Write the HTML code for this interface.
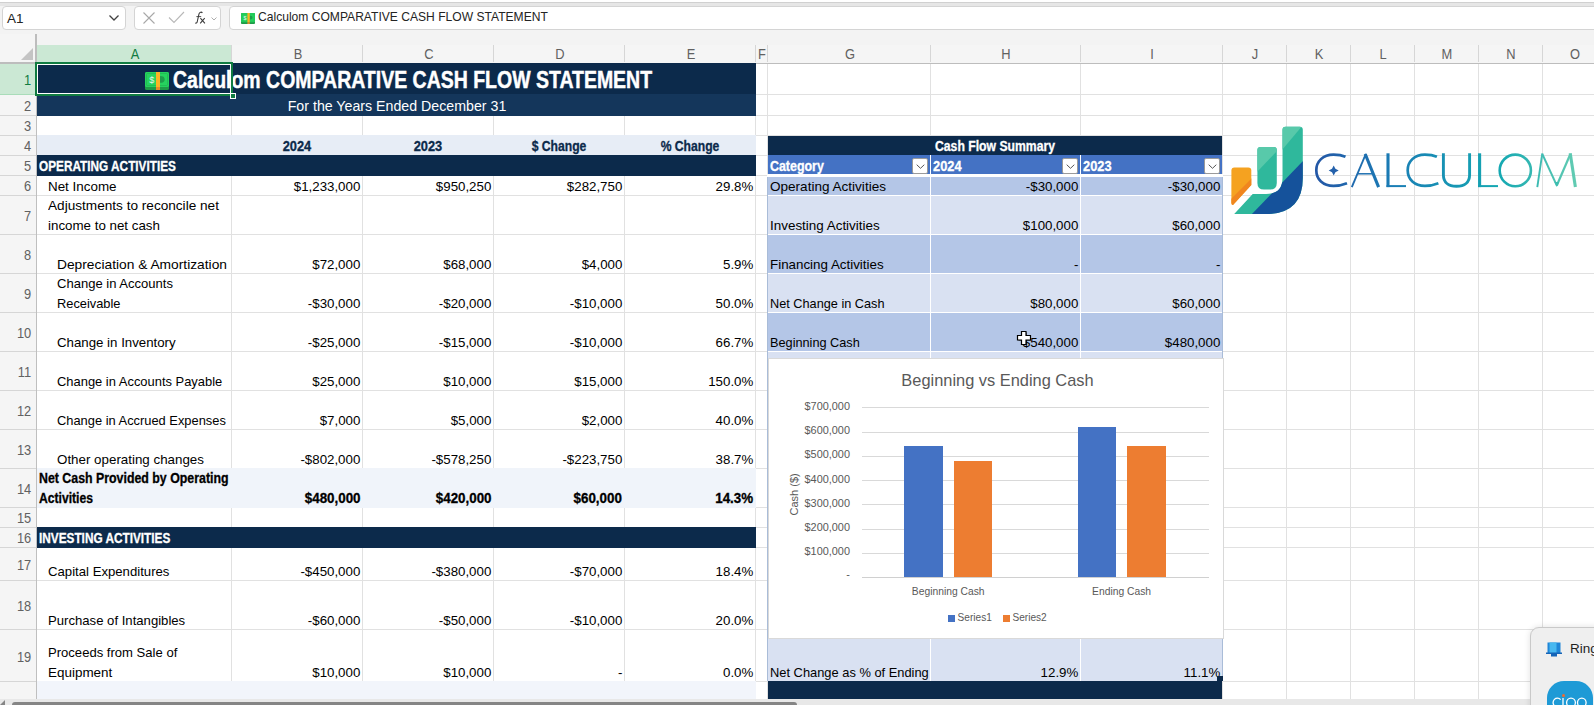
<!DOCTYPE html>
<html><head><meta charset="utf-8"><style>
html,body{margin:0;padding:0;width:1594px;height:705px;overflow:hidden;background:#fff;font-family:"Liberation Sans",sans-serif;}
.r{position:absolute;box-sizing:content-box;}
.t{position:absolute;white-space:nowrap;}
</style></head><body>
<div class="r" style="left:0px;top:0px;width:1594px;height:45px;background:#f3f3f3;"></div>
<div class="r" style="left:0px;top:0px;width:1594px;height:2px;background:#ffffff;"></div>
<div class="r" style="left:0px;top:2px;width:1594px;height:1px;background:#d0d0d0;"></div>
<div class="r" style="left:0px;top:3px;width:1594px;height:3px;background:#e6e6e6;"></div>
<div class="r" style="left:2px;top:6px;width:122px;height:22px;background:#fff;border:1px solid #d4d4d4;border-radius:4px"></div>
<div class="t" style="left:7.00px;top:11.57px;font-size:13.5px;line-height:13.5px;font-weight:400;color:#242424;transform-origin:left;">A1</div>
<svg class="r" style="left:107.5px;top:14px" width="12" height="8" viewBox="0 0 12 8"><path d="M1.5 1.5 L6 6 L10.5 1.5" fill="none" stroke="#424242" stroke-width="1.3"/></svg>
<div class="r" style="left:134px;top:6px;width:85px;height:22px;background:#fff;border:1px solid #d4d4d4;border-radius:4px"></div>
<svg class="r" style="left:142px;top:11px" width="14" height="14" viewBox="0 0 14 14"><path d="M1.5 1.5 L12.5 12.5 M12.5 1.5 L1.5 12.5" fill="none" stroke="#a8a8a8" stroke-width="1.1"/></svg>
<svg class="r" style="left:168px;top:11px" width="17" height="13" viewBox="0 0 17 13"><path d="M1 6.5 L6 11.5 L16 1" fill="none" stroke="#b8b8b8" stroke-width="1.1"/></svg>
<svg class="r" style="left:190px;top:8px" width="20" height="20" viewBox="190 8 20 20"><g fill="none" stroke="#3a3a3a" stroke-width="1.05"><path d="M202.4 12.9 C201.6 11.7 199.5 11.8 199 13.8 L197.2 21.8 C196.9 23.2 195.9 23.4 195.2 22.8"/><path d="M196.4 16.6 H201.2" stroke-width="0.9"/><path d="M200.4 18.2 L204.9 23.4 M204.7 18.2 L200.2 23.4"/></g></svg>
<svg class="r" style="left:211px;top:17px" width="6" height="4" viewBox="0 0 6 4"><path d="M0.5 0.5 L3 3 L5.5 0.5" fill="none" stroke="#999" stroke-width="0.8"/></svg>
<div class="r" style="left:229px;top:6px;width:1400px;height:22px;background:#fff;border:1px solid #d4d4d4;border-radius:4px"></div>
<svg class="r" style="left:241px;top:13px" width="14" height="11" viewBox="0 0 24 18" preserveAspectRatio="none"><rect x="0" y="0" width="24" height="18" rx="1.6" fill="#1f9a48"/><rect x="0" y="0" width="24" height="15" rx="1.6" fill="#26d35e"/><rect x="1.5" y="1.5" width="21" height="12" rx="0.8" fill="none" stroke="#1fb552" stroke-width="0.7"/><path d="M15 4 A4.7 3.4 0 0 1 15 10.8 Z" fill="#1f9d4c"/><rect x="11" y="0" width="4" height="15" fill="#fbb424"/><rect x="11" y="15" width="4" height="3" fill="#e88a2a"/><text x="4.2" y="11" font-size="9" fill="#e6f5ea" font-family="Liberation Sans">$</text></svg>
<div class="t" style="left:258.00px;top:10.29px;font-size:13.6px;line-height:13.6px;font-weight:400;color:#242424;transform:scaleX(0.889);transform-origin:left;">Calculom COMPARATIVE CASH FLOW STATEMENT</div>
<div class="r" style="left:0px;top:45px;width:1594px;height:18px;background:#f5f5f5;"></div>
<div class="r" style="left:0px;top:34px;width:36px;height:11px;background:#f5f5f5;"></div>
<div class="r" style="left:0px;top:63px;width:36px;height:642px;background:#f5f5f5;"></div>
<div class="r" style="left:0px;top:63px;width:1594px;height:1px;background:#bdbdbd;"></div>
<div class="r" style="left:36px;top:34px;width:1px;height:671px;background:#bfbfbf;"></div>
<svg class="r" style="left:20px;top:48px" width="14" height="13" viewBox="0 0 14 13"><path d="M13 0 L13 12 L1 12 Z" fill="#c4c4c4"/></svg>
<div class="r" style="left:37px;top:45px;width:195px;height:17px;background:#cbe8d4;"></div>
<div class="r" style="left:231px;top:45px;width:1px;height:17px;background:#9fd5b0;"></div>
<div class="r" style="left:37px;top:62px;width:195px;height:1px;background:#107c41;"></div>
<div class="r" style="left:0px;top:64px;width:35px;height:31px;background:#cbe8d4;"></div>
<div class="r" style="left:231px;top:45px;width:1px;height:17px;background:#d6d6d6;"></div>
<div class="t" style="left:-465.20px;width:1200px;top:46.95px;font-size:14px;line-height:14px;font-weight:400;color:#107c41;text-align:center;transform:scaleX(0.92);transform-origin:center;">A</div>
<div class="r" style="left:362px;top:45px;width:1px;height:17px;background:#d6d6d6;"></div>
<div class="t" style="left:-302.20px;width:1200px;top:46.95px;font-size:14px;line-height:14px;font-weight:400;color:#616161;text-align:center;transform:scaleX(0.92);transform-origin:center;">B</div>
<div class="r" style="left:493px;top:45px;width:1px;height:17px;background:#d6d6d6;"></div>
<div class="t" style="left:-171.20px;width:1200px;top:46.95px;font-size:14px;line-height:14px;font-weight:400;color:#616161;text-align:center;transform:scaleX(0.92);transform-origin:center;">C</div>
<div class="r" style="left:624px;top:45px;width:1px;height:17px;background:#d6d6d6;"></div>
<div class="t" style="left:-40.20px;width:1200px;top:46.95px;font-size:14px;line-height:14px;font-weight:400;color:#616161;text-align:center;transform:scaleX(0.92);transform-origin:center;">D</div>
<div class="r" style="left:755px;top:45px;width:1px;height:17px;background:#d6d6d6;"></div>
<div class="t" style="left:90.80px;width:1200px;top:46.95px;font-size:14px;line-height:14px;font-weight:400;color:#616161;text-align:center;transform:scaleX(0.92);transform-origin:center;">E</div>
<div class="r" style="left:767px;top:45px;width:1px;height:17px;background:#d6d6d6;"></div>
<div class="t" style="left:162.30px;width:1200px;top:46.95px;font-size:14px;line-height:14px;font-weight:400;color:#616161;text-align:center;transform:scaleX(0.92);transform-origin:center;">F</div>
<div class="r" style="left:930px;top:45px;width:1px;height:17px;background:#d6d6d6;"></div>
<div class="t" style="left:249.80px;width:1200px;top:46.95px;font-size:14px;line-height:14px;font-weight:400;color:#616161;text-align:center;transform:scaleX(0.92);transform-origin:center;">G</div>
<div class="r" style="left:1080px;top:45px;width:1px;height:17px;background:#d6d6d6;"></div>
<div class="t" style="left:406.30px;width:1200px;top:46.95px;font-size:14px;line-height:14px;font-weight:400;color:#616161;text-align:center;transform:scaleX(0.92);transform-origin:center;">H</div>
<div class="r" style="left:1222px;top:45px;width:1px;height:17px;background:#d6d6d6;"></div>
<div class="t" style="left:552.30px;width:1200px;top:46.95px;font-size:14px;line-height:14px;font-weight:400;color:#616161;text-align:center;transform:scaleX(0.92);transform-origin:center;">I</div>
<div class="r" style="left:1286px;top:45px;width:1px;height:17px;background:#d6d6d6;"></div>
<div class="t" style="left:655.30px;width:1200px;top:46.95px;font-size:14px;line-height:14px;font-weight:400;color:#616161;text-align:center;transform:scaleX(0.92);transform-origin:center;">J</div>
<div class="r" style="left:1350px;top:45px;width:1px;height:17px;background:#d6d6d6;"></div>
<div class="t" style="left:719.30px;width:1200px;top:46.95px;font-size:14px;line-height:14px;font-weight:400;color:#616161;text-align:center;transform:scaleX(0.92);transform-origin:center;">K</div>
<div class="r" style="left:1414px;top:45px;width:1px;height:17px;background:#d6d6d6;"></div>
<div class="t" style="left:783.30px;width:1200px;top:46.95px;font-size:14px;line-height:14px;font-weight:400;color:#616161;text-align:center;transform:scaleX(0.92);transform-origin:center;">L</div>
<div class="r" style="left:1478px;top:45px;width:1px;height:17px;background:#d6d6d6;"></div>
<div class="t" style="left:847.30px;width:1200px;top:46.95px;font-size:14px;line-height:14px;font-weight:400;color:#616161;text-align:center;transform:scaleX(0.92);transform-origin:center;">M</div>
<div class="r" style="left:1542px;top:45px;width:1px;height:17px;background:#d6d6d6;"></div>
<div class="t" style="left:911.30px;width:1200px;top:46.95px;font-size:14px;line-height:14px;font-weight:400;color:#616161;text-align:center;transform:scaleX(0.92);transform-origin:center;">N</div>
<div class="t" style="left:975.30px;width:1200px;top:46.95px;font-size:14px;line-height:14px;font-weight:400;color:#616161;text-align:center;transform:scaleX(0.92);transform-origin:center;">O</div>
<div class="r" style="left:37px;top:64px;width:1557px;height:641px;background:#ffffff;"></div>
<div class="r" style="left:231px;top:64px;width:1px;height:641px;background:#e1e1e1;"></div>
<div class="r" style="left:362px;top:64px;width:1px;height:641px;background:#e1e1e1;"></div>
<div class="r" style="left:493px;top:64px;width:1px;height:641px;background:#e1e1e1;"></div>
<div class="r" style="left:624px;top:64px;width:1px;height:641px;background:#e1e1e1;"></div>
<div class="r" style="left:755px;top:64px;width:1px;height:641px;background:#e1e1e1;"></div>
<div class="r" style="left:767px;top:64px;width:1px;height:641px;background:#e1e1e1;"></div>
<div class="r" style="left:930px;top:64px;width:1px;height:641px;background:#e1e1e1;"></div>
<div class="r" style="left:1080px;top:64px;width:1px;height:641px;background:#e1e1e1;"></div>
<div class="r" style="left:1222px;top:64px;width:1px;height:641px;background:#e1e1e1;"></div>
<div class="r" style="left:1286px;top:64px;width:1px;height:641px;background:#e1e1e1;"></div>
<div class="r" style="left:1350px;top:64px;width:1px;height:641px;background:#e1e1e1;"></div>
<div class="r" style="left:1414px;top:64px;width:1px;height:641px;background:#e1e1e1;"></div>
<div class="r" style="left:1478px;top:64px;width:1px;height:641px;background:#e1e1e1;"></div>
<div class="r" style="left:1542px;top:64px;width:1px;height:641px;background:#e1e1e1;"></div>
<div class="r" style="left:37px;top:94px;width:1557px;height:1px;background:#e1e1e1;"></div>
<div class="r" style="left:37px;top:115px;width:1557px;height:1px;background:#e1e1e1;"></div>
<div class="r" style="left:37px;top:135px;width:1557px;height:1px;background:#e1e1e1;"></div>
<div class="r" style="left:37px;top:155px;width:1557px;height:1px;background:#e1e1e1;"></div>
<div class="r" style="left:37px;top:175px;width:1557px;height:1px;background:#e1e1e1;"></div>
<div class="r" style="left:37px;top:195px;width:1557px;height:1px;background:#e1e1e1;"></div>
<div class="r" style="left:37px;top:234px;width:1557px;height:1px;background:#e1e1e1;"></div>
<div class="r" style="left:37px;top:273px;width:1557px;height:1px;background:#e1e1e1;"></div>
<div class="r" style="left:37px;top:312px;width:1557px;height:1px;background:#e1e1e1;"></div>
<div class="r" style="left:37px;top:351px;width:1557px;height:1px;background:#e1e1e1;"></div>
<div class="r" style="left:37px;top:390px;width:1557px;height:1px;background:#e1e1e1;"></div>
<div class="r" style="left:37px;top:429px;width:1557px;height:1px;background:#e1e1e1;"></div>
<div class="r" style="left:37px;top:468px;width:1557px;height:1px;background:#e1e1e1;"></div>
<div class="r" style="left:37px;top:507px;width:1557px;height:1px;background:#e1e1e1;"></div>
<div class="r" style="left:37px;top:527px;width:1557px;height:1px;background:#e1e1e1;"></div>
<div class="r" style="left:37px;top:547px;width:1557px;height:1px;background:#e1e1e1;"></div>
<div class="r" style="left:37px;top:580px;width:1557px;height:1px;background:#e1e1e1;"></div>
<div class="r" style="left:37px;top:629px;width:1557px;height:1px;background:#e1e1e1;"></div>
<div class="r" style="left:37px;top:681px;width:1557px;height:1px;background:#e1e1e1;"></div>
<div class="r" style="left:0px;top:94px;width:36px;height:1px;background:#a9dcb9;"></div>
<div class="t" style="right:1562.50px;top:72.84px;font-size:14.6px;line-height:14.6px;font-weight:400;color:#107c41;text-align:right;transform:scaleX(0.88);transform-origin:right;">1</div>
<div class="r" style="left:0px;top:115px;width:36px;height:1px;background:#d6d6d6;"></div>
<div class="t" style="right:1562.50px;top:98.64px;font-size:14.6px;line-height:14.6px;font-weight:400;color:#616161;text-align:right;transform:scaleX(0.88);transform-origin:right;">2</div>
<div class="r" style="left:0px;top:135px;width:36px;height:1px;background:#d6d6d6;"></div>
<div class="t" style="right:1562.50px;top:119.14px;font-size:14.6px;line-height:14.6px;font-weight:400;color:#616161;text-align:right;transform:scaleX(0.88);transform-origin:right;">3</div>
<div class="r" style="left:0px;top:155px;width:36px;height:1px;background:#d6d6d6;"></div>
<div class="t" style="right:1562.50px;top:139.14px;font-size:14.6px;line-height:14.6px;font-weight:400;color:#616161;text-align:right;transform:scaleX(0.88);transform-origin:right;">4</div>
<div class="r" style="left:0px;top:175px;width:36px;height:1px;background:#d6d6d6;"></div>
<div class="t" style="right:1562.50px;top:159.14px;font-size:14.6px;line-height:14.6px;font-weight:400;color:#616161;text-align:right;transform:scaleX(0.88);transform-origin:right;">5</div>
<div class="r" style="left:0px;top:195px;width:36px;height:1px;background:#d6d6d6;"></div>
<div class="t" style="right:1562.50px;top:179.14px;font-size:14.6px;line-height:14.6px;font-weight:400;color:#616161;text-align:right;transform:scaleX(0.88);transform-origin:right;">6</div>
<div class="r" style="left:0px;top:234px;width:36px;height:1px;background:#d6d6d6;"></div>
<div class="t" style="right:1562.50px;top:209.34px;font-size:14.6px;line-height:14.6px;font-weight:400;color:#616161;text-align:right;transform:scaleX(0.88);transform-origin:right;">7</div>
<div class="r" style="left:0px;top:273px;width:36px;height:1px;background:#d6d6d6;"></div>
<div class="t" style="right:1562.50px;top:248.34px;font-size:14.6px;line-height:14.6px;font-weight:400;color:#616161;text-align:right;transform:scaleX(0.88);transform-origin:right;">8</div>
<div class="r" style="left:0px;top:312px;width:36px;height:1px;background:#d6d6d6;"></div>
<div class="t" style="right:1562.50px;top:287.34px;font-size:14.6px;line-height:14.6px;font-weight:400;color:#616161;text-align:right;transform:scaleX(0.88);transform-origin:right;">9</div>
<div class="r" style="left:0px;top:351px;width:36px;height:1px;background:#d6d6d6;"></div>
<div class="t" style="right:1562.50px;top:326.34px;font-size:14.6px;line-height:14.6px;font-weight:400;color:#616161;text-align:right;transform:scaleX(0.88);transform-origin:right;">10</div>
<div class="r" style="left:0px;top:390px;width:36px;height:1px;background:#d6d6d6;"></div>
<div class="t" style="right:1562.50px;top:365.34px;font-size:14.6px;line-height:14.6px;font-weight:400;color:#616161;text-align:right;transform:scaleX(0.88);transform-origin:right;">11</div>
<div class="r" style="left:0px;top:429px;width:36px;height:1px;background:#d6d6d6;"></div>
<div class="t" style="right:1562.50px;top:404.34px;font-size:14.6px;line-height:14.6px;font-weight:400;color:#616161;text-align:right;transform:scaleX(0.88);transform-origin:right;">12</div>
<div class="r" style="left:0px;top:468px;width:36px;height:1px;background:#d6d6d6;"></div>
<div class="t" style="right:1562.50px;top:443.34px;font-size:14.6px;line-height:14.6px;font-weight:400;color:#616161;text-align:right;transform:scaleX(0.88);transform-origin:right;">13</div>
<div class="r" style="left:0px;top:507px;width:36px;height:1px;background:#d6d6d6;"></div>
<div class="t" style="right:1562.50px;top:482.34px;font-size:14.6px;line-height:14.6px;font-weight:400;color:#616161;text-align:right;transform:scaleX(0.88);transform-origin:right;">14</div>
<div class="r" style="left:0px;top:527px;width:36px;height:1px;background:#d6d6d6;"></div>
<div class="t" style="right:1562.50px;top:511.14px;font-size:14.6px;line-height:14.6px;font-weight:400;color:#616161;text-align:right;transform:scaleX(0.88);transform-origin:right;">15</div>
<div class="r" style="left:0px;top:547px;width:36px;height:1px;background:#d6d6d6;"></div>
<div class="t" style="right:1562.50px;top:531.14px;font-size:14.6px;line-height:14.6px;font-weight:400;color:#616161;text-align:right;transform:scaleX(0.88);transform-origin:right;">16</div>
<div class="r" style="left:0px;top:580px;width:36px;height:1px;background:#d6d6d6;"></div>
<div class="t" style="right:1562.50px;top:558.34px;font-size:14.6px;line-height:14.6px;font-weight:400;color:#616161;text-align:right;transform:scaleX(0.88);transform-origin:right;">17</div>
<div class="r" style="left:0px;top:629px;width:36px;height:1px;background:#d6d6d6;"></div>
<div class="t" style="right:1562.50px;top:599.34px;font-size:14.6px;line-height:14.6px;font-weight:400;color:#616161;text-align:right;transform:scaleX(0.88);transform-origin:right;">18</div>
<div class="r" style="left:0px;top:681px;width:36px;height:1px;background:#d6d6d6;"></div>
<div class="t" style="right:1562.50px;top:649.84px;font-size:14.6px;line-height:14.6px;font-weight:400;color:#616161;text-align:right;transform:scaleX(0.88);transform-origin:right;">19</div>
<div class="r" style="left:37px;top:63px;width:719px;height:31px;background:#0c2a4b;"></div>
<div class="r" style="left:37px;top:94px;width:719px;height:22px;background:#14365b;"></div>
<div class="r" style="left:37px;top:135px;width:719px;height:21px;background:#e7edf6;"></div>
<div class="r" style="left:37px;top:155px;width:719px;height:21px;background:#0c2a4b;"></div>
<div class="r" style="left:37px;top:468px;width:719px;height:40px;background:#f0f4fa;"></div>
<div class="r" style="left:37px;top:527px;width:719px;height:21px;background:#0c2a4b;"></div>
<div class="r" style="left:37px;top:681px;width:719px;height:18px;background:#f2f5fb;"></div>
<svg class="r" style="left:145px;top:72px" width="24" height="18" viewBox="0 0 24 18" preserveAspectRatio="none"><rect x="0" y="0" width="24" height="18" rx="1.6" fill="#1f9a48"/><rect x="0" y="0" width="24" height="15" rx="1.6" fill="#26d35e"/><rect x="1.5" y="1.5" width="21" height="12" rx="0.8" fill="none" stroke="#1fb552" stroke-width="0.7"/><path d="M15 4 A4.7 3.4 0 0 1 15 10.8 Z" fill="#1f9d4c"/><rect x="11" y="0" width="4" height="15" fill="#fbb424"/><rect x="11" y="15" width="4" height="3" fill="#e88a2a"/><text x="4.2" y="11" font-size="9" fill="#e6f5ea" font-family="Liberation Sans">$</text></svg>
<div class="t" style="left:173.00px;top:68.93px;font-size:23px;line-height:23px;font-weight:700;color:#fff;transform:scaleX(0.847);transform-origin:left;-webkit-text-stroke:0.45px #fff;">Calculom COMPARATIVE CASH FLOW STATEMENT</div>
<div class="t" style="left:-203.50px;width:1200px;top:98.75px;font-size:14px;line-height:14px;font-weight:400;color:#fff;text-align:center;transform:scaleX(1.014);transform-origin:center;">For the Years Ended December 31</div>
<div class="t" style="left:-303.00px;width:1200px;top:140.12px;font-size:13.8px;line-height:13.8px;font-weight:700;color:#0c2a4b;text-align:center;transform:scaleX(0.93);transform-origin:center;-webkit-text-stroke:0.3px #0c2a4b;">2024</div>
<div class="t" style="left:-172.00px;width:1200px;top:140.12px;font-size:13.8px;line-height:13.8px;font-weight:700;color:#0c2a4b;text-align:center;transform:scaleX(0.93);transform-origin:center;-webkit-text-stroke:0.3px #0c2a4b;">2023</div>
<div class="t" style="left:-41.00px;width:1200px;top:140.12px;font-size:13.8px;line-height:13.8px;font-weight:700;color:#0c2a4b;text-align:center;transform:scaleX(0.88);transform-origin:center;-webkit-text-stroke:0.3px #0c2a4b;">$ Change</div>
<div class="t" style="left:90.00px;width:1200px;top:140.12px;font-size:13.8px;line-height:13.8px;font-weight:700;color:#0c2a4b;text-align:center;transform:scaleX(0.88);transform-origin:center;-webkit-text-stroke:0.3px #0c2a4b;">% Change</div>
<div class="t" style="left:39.00px;top:160.32px;font-size:13.8px;line-height:13.8px;font-weight:700;color:#fff;transform:scaleX(0.855);transform-origin:left;-webkit-text-stroke:0.3px #fff;">OPERATING ACTIVITIES</div>
<div class="t" style="left:39.00px;top:532.32px;font-size:13.8px;line-height:13.8px;font-weight:700;color:#fff;transform:scaleX(0.855);transform-origin:left;-webkit-text-stroke:0.3px #fff;">INVESTING ACTIVITIES</div>
<div class="t" style="left:47.75px;top:180.34px;font-size:13.3px;line-height:13.3px;font-weight:400;color:#000000;transform:scaleX(1.0073529411764706);transform-origin:left;">Net Income</div>
<div class="t" style="right:1233.70px;top:180.34px;font-size:13.3px;line-height:13.3px;font-weight:400;color:#000000;text-align:right;transform-origin:right;">$1,233,000</div>
<div class="t" style="right:1102.70px;top:180.34px;font-size:13.3px;line-height:13.3px;font-weight:400;color:#000000;text-align:right;transform-origin:right;">$950,250</div>
<div class="t" style="right:971.70px;top:180.34px;font-size:13.3px;line-height:13.3px;font-weight:400;color:#000000;text-align:right;transform-origin:right;">$282,750</div>
<div class="t" style="right:840.70px;top:180.34px;font-size:13.3px;line-height:13.3px;font-weight:400;color:#000000;text-align:right;transform-origin:right;">29.8%</div>
<div class="t" style="left:47.75px;top:199.34px;font-size:13.3px;line-height:13.3px;font-weight:400;color:#000000;transform:scaleX(1.0233393177737882);transform-origin:left;">Adjustments to reconcile net</div>
<div class="t" style="left:47.75px;top:219.34px;font-size:13.3px;line-height:13.3px;font-weight:400;color:#000000;transform:scaleX(1.0031347962382444);transform-origin:left;">income to net cash</div>
<div class="t" style="left:57.40px;top:258.34px;font-size:13.3px;line-height:13.3px;font-weight:400;color:#000000;transform:scaleX(1.035953686776356);transform-origin:left;">Depreciation &amp; Amortization</div>
<div class="t" style="right:1233.70px;top:258.34px;font-size:13.3px;line-height:13.3px;font-weight:400;color:#000000;text-align:right;transform-origin:right;">$72,000</div>
<div class="t" style="right:1102.70px;top:258.34px;font-size:13.3px;line-height:13.3px;font-weight:400;color:#000000;text-align:right;transform-origin:right;">$68,000</div>
<div class="t" style="right:971.70px;top:258.34px;font-size:13.3px;line-height:13.3px;font-weight:400;color:#000000;text-align:right;transform-origin:right;">$4,000</div>
<div class="t" style="right:840.70px;top:258.34px;font-size:13.3px;line-height:13.3px;font-weight:400;color:#000000;text-align:right;transform-origin:right;">5.9%</div>
<div class="t" style="left:57.40px;top:277.34px;font-size:13.3px;line-height:13.3px;font-weight:400;color:#000000;transform:scaleX(0.9805579036348268);transform-origin:left;">Change in Accounts</div>
<div class="t" style="left:57.40px;top:297.34px;font-size:13.3px;line-height:13.3px;font-weight:400;color:#000000;transform:scaleX(0.9650455927051672);transform-origin:left;">Receivable</div>
<div class="t" style="right:1233.70px;top:297.34px;font-size:13.3px;line-height:13.3px;font-weight:400;color:#000000;text-align:right;transform-origin:right;">-$30,000</div>
<div class="t" style="right:1102.70px;top:297.34px;font-size:13.3px;line-height:13.3px;font-weight:400;color:#000000;text-align:right;transform-origin:right;">-$20,000</div>
<div class="t" style="right:971.70px;top:297.34px;font-size:13.3px;line-height:13.3px;font-weight:400;color:#000000;text-align:right;transform-origin:right;">-$10,000</div>
<div class="t" style="right:840.70px;top:297.34px;font-size:13.3px;line-height:13.3px;font-weight:400;color:#000000;text-align:right;transform-origin:right;">50.0%</div>
<div class="t" style="left:57.40px;top:336.34px;font-size:13.3px;line-height:13.3px;font-weight:400;color:#000000;transform:scaleX(0.9970600587988241);transform-origin:left;">Change in Inventory</div>
<div class="t" style="right:1233.70px;top:336.34px;font-size:13.3px;line-height:13.3px;font-weight:400;color:#000000;text-align:right;transform-origin:right;">-$25,000</div>
<div class="t" style="right:1102.70px;top:336.34px;font-size:13.3px;line-height:13.3px;font-weight:400;color:#000000;text-align:right;transform-origin:right;">-$15,000</div>
<div class="t" style="right:971.70px;top:336.34px;font-size:13.3px;line-height:13.3px;font-weight:400;color:#000000;text-align:right;transform-origin:right;">-$10,000</div>
<div class="t" style="right:840.70px;top:336.34px;font-size:13.3px;line-height:13.3px;font-weight:400;color:#000000;text-align:right;transform-origin:right;">66.7%</div>
<div class="t" style="left:57.40px;top:375.34px;font-size:13.3px;line-height:13.3px;font-weight:400;color:#000000;transform:scaleX(0.9720670391061452);transform-origin:left;">Change in Accounts Payable</div>
<div class="t" style="right:1233.70px;top:375.34px;font-size:13.3px;line-height:13.3px;font-weight:400;color:#000000;text-align:right;transform-origin:right;">$25,000</div>
<div class="t" style="right:1102.70px;top:375.34px;font-size:13.3px;line-height:13.3px;font-weight:400;color:#000000;text-align:right;transform-origin:right;">$10,000</div>
<div class="t" style="right:971.70px;top:375.34px;font-size:13.3px;line-height:13.3px;font-weight:400;color:#000000;text-align:right;transform-origin:right;">$15,000</div>
<div class="t" style="right:840.70px;top:375.34px;font-size:13.3px;line-height:13.3px;font-weight:400;color:#000000;text-align:right;transform-origin:right;">150.0%</div>
<div class="t" style="left:57.40px;top:414.34px;font-size:13.3px;line-height:13.3px;font-weight:400;color:#000000;transform:scaleX(0.9679083094555875);transform-origin:left;">Change in Accrued Expenses</div>
<div class="t" style="right:1233.70px;top:414.34px;font-size:13.3px;line-height:13.3px;font-weight:400;color:#000000;text-align:right;transform-origin:right;">$7,000</div>
<div class="t" style="right:1102.70px;top:414.34px;font-size:13.3px;line-height:13.3px;font-weight:400;color:#000000;text-align:right;transform-origin:right;">$5,000</div>
<div class="t" style="right:971.70px;top:414.34px;font-size:13.3px;line-height:13.3px;font-weight:400;color:#000000;text-align:right;transform-origin:right;">$2,000</div>
<div class="t" style="right:840.70px;top:414.34px;font-size:13.3px;line-height:13.3px;font-weight:400;color:#000000;text-align:right;transform-origin:right;">40.0%</div>
<div class="t" style="left:57.40px;top:453.34px;font-size:13.3px;line-height:13.3px;font-weight:400;color:#000000;transform:scaleX(1.0040983606557377);transform-origin:left;">Other operating changes</div>
<div class="t" style="right:1233.70px;top:453.34px;font-size:13.3px;line-height:13.3px;font-weight:400;color:#000000;text-align:right;transform-origin:right;">-$802,000</div>
<div class="t" style="right:1102.70px;top:453.34px;font-size:13.3px;line-height:13.3px;font-weight:400;color:#000000;text-align:right;transform-origin:right;">-$578,250</div>
<div class="t" style="right:971.70px;top:453.34px;font-size:13.3px;line-height:13.3px;font-weight:400;color:#000000;text-align:right;transform-origin:right;">-$223,750</div>
<div class="t" style="right:840.70px;top:453.34px;font-size:13.3px;line-height:13.3px;font-weight:400;color:#000000;text-align:right;transform-origin:right;">38.7%</div>
<div class="t" style="left:47.75px;top:565.34px;font-size:13.3px;line-height:13.3px;font-weight:400;color:#000000;transform:scaleX(0.9898167006109979);transform-origin:left;">Capital Expenditures</div>
<div class="t" style="right:1233.70px;top:565.34px;font-size:13.3px;line-height:13.3px;font-weight:400;color:#000000;text-align:right;transform-origin:right;">-$450,000</div>
<div class="t" style="right:1102.70px;top:565.34px;font-size:13.3px;line-height:13.3px;font-weight:400;color:#000000;text-align:right;transform-origin:right;">-$380,000</div>
<div class="t" style="right:971.70px;top:565.34px;font-size:13.3px;line-height:13.3px;font-weight:400;color:#000000;text-align:right;transform-origin:right;">-$70,000</div>
<div class="t" style="right:840.70px;top:565.34px;font-size:13.3px;line-height:13.3px;font-weight:400;color:#000000;text-align:right;transform-origin:right;">18.4%</div>
<div class="t" style="left:47.75px;top:614.34px;font-size:13.3px;line-height:13.3px;font-weight:400;color:#000000;transform:scaleX(0.9870503597122301);transform-origin:left;">Purchase of Intangibles</div>
<div class="t" style="right:1233.70px;top:614.34px;font-size:13.3px;line-height:13.3px;font-weight:400;color:#000000;text-align:right;transform-origin:right;">-$60,000</div>
<div class="t" style="right:1102.70px;top:614.34px;font-size:13.3px;line-height:13.3px;font-weight:400;color:#000000;text-align:right;transform-origin:right;">-$50,000</div>
<div class="t" style="right:971.70px;top:614.34px;font-size:13.3px;line-height:13.3px;font-weight:400;color:#000000;text-align:right;transform-origin:right;">-$10,000</div>
<div class="t" style="right:840.70px;top:614.34px;font-size:13.3px;line-height:13.3px;font-weight:400;color:#000000;text-align:right;transform-origin:right;">20.0%</div>
<div class="t" style="left:47.75px;top:646.34px;font-size:13.3px;line-height:13.3px;font-weight:400;color:#000000;transform:scaleX(0.9829092290163312);transform-origin:left;">Proceeds from Sale of</div>
<div class="t" style="left:47.75px;top:666.34px;font-size:13.3px;line-height:13.3px;font-weight:400;color:#000000;transform:scaleX(1.011006289308176);transform-origin:left;">Equipment</div>
<div class="t" style="right:1233.70px;top:666.34px;font-size:13.3px;line-height:13.3px;font-weight:400;color:#000000;text-align:right;transform-origin:right;">$10,000</div>
<div class="t" style="right:1102.70px;top:666.34px;font-size:13.3px;line-height:13.3px;font-weight:400;color:#000000;text-align:right;transform-origin:right;">$10,000</div>
<div class="t" style="right:971.70px;top:666.34px;font-size:13.3px;line-height:13.3px;font-weight:400;color:#000000;text-align:right;transform-origin:right;">-</div>
<div class="t" style="right:840.70px;top:666.34px;font-size:13.3px;line-height:13.3px;font-weight:400;color:#000000;text-align:right;transform-origin:right;">0.0%</div>
<div class="t" style="left:38.50px;top:471.92px;font-size:13.8px;line-height:13.8px;font-weight:700;color:#000000;transform:scaleX(0.8958185683912119);transform-origin:left;-webkit-text-stroke:0.3px #000000;">Net Cash Provided by Operating</div>
<div class="t" style="left:38.50px;top:491.92px;font-size:13.8px;line-height:13.8px;font-weight:700;color:#000000;transform:scaleX(0.8801955990220048);transform-origin:left;-webkit-text-stroke:0.3px #000000;">Activities</div>
<div class="t" style="right:1233.70px;top:491.92px;font-size:13.8px;line-height:13.8px;font-weight:700;color:#000000;text-align:right;transform:scaleX(0.9688405797101448);transform-origin:right;-webkit-text-stroke:0.3px #000000;">$480,000</div>
<div class="t" style="right:1102.70px;top:491.92px;font-size:13.8px;line-height:13.8px;font-weight:700;color:#000000;text-align:right;transform:scaleX(0.9688405797101448);transform-origin:right;-webkit-text-stroke:0.3px #000000;">$420,000</div>
<div class="t" style="right:971.70px;top:491.92px;font-size:13.8px;line-height:13.8px;font-weight:700;color:#000000;text-align:right;transform:scaleX(0.9688405797101448);transform-origin:right;-webkit-text-stroke:0.3px #000000;">$60,000</div>
<div class="t" style="right:840.70px;top:491.92px;font-size:13.8px;line-height:13.8px;font-weight:700;color:#000000;text-align:right;transform:scaleX(0.9688405797101448);transform-origin:right;-webkit-text-stroke:0.3px #000000;">14.3%</div>
<div class="r" style="left:768px;top:136px;width:454px;height:19px;background:#0c2a4b;"></div>
<div class="r" style="left:768px;top:155px;width:454px;height:19px;background:#4472c4;"></div>
<div class="r" style="left:767px;top:174px;width:456px;height:507px;background:#ffffff;"></div>
<div class="r" style="left:768px;top:177px;width:454px;height:18px;background:#b4c6e7;"></div>
<div class="r" style="left:768px;top:196px;width:454px;height:38px;background:#d9e1f2;"></div>
<div class="r" style="left:768px;top:235px;width:454px;height:38px;background:#b4c6e7;"></div>
<div class="r" style="left:768px;top:274px;width:454px;height:38px;background:#d9e1f2;"></div>
<div class="r" style="left:768px;top:313px;width:454px;height:38px;background:#b4c6e7;"></div>
<div class="r" style="left:768px;top:352px;width:454px;height:38px;background:#d9e1f2;"></div>
<div class="r" style="left:768px;top:391px;width:454px;height:38px;background:#b4c6e7;"></div>
<div class="r" style="left:768px;top:430px;width:454px;height:38px;background:#d9e1f2;"></div>
<div class="r" style="left:768px;top:469px;width:454px;height:38px;background:#b4c6e7;"></div>
<div class="r" style="left:768px;top:508px;width:454px;height:19px;background:#d9e1f2;"></div>
<div class="r" style="left:768px;top:528px;width:454px;height:19px;background:#b4c6e7;"></div>
<div class="r" style="left:768px;top:548px;width:454px;height:32px;background:#d9e1f2;"></div>
<div class="r" style="left:768px;top:581px;width:454px;height:48px;background:#b4c6e7;"></div>
<div class="r" style="left:768px;top:630px;width:454px;height:51px;background:#d9e1f2;"></div>
<div class="r" style="left:767px;top:177px;width:1px;height:504px;background:#a9bcd8;"></div>
<div class="r" style="left:1222px;top:177px;width:1px;height:504px;background:#a9bcd8;"></div>
<div class="r" style="left:768px;top:681px;width:454px;height:18px;background:#0c2a4b;"></div>
<div class="r" style="left:930px;top:155px;width:1px;height:526px;background:#ffffff;"></div>
<div class="r" style="left:1080px;top:155px;width:1px;height:526px;background:#ffffff;"></div>
<div class="t" style="left:395.00px;width:1200px;top:139.72px;font-size:13.8px;line-height:13.8px;font-weight:700;color:#fff;text-align:center;transform:scaleX(0.884);transform-origin:center;-webkit-text-stroke:0.3px #fff;">Cash Flow Summary</div>
<div class="t" style="left:770.00px;top:160.12px;font-size:13.8px;line-height:13.8px;font-weight:700;color:#fff;transform:scaleX(0.9);transform-origin:left;-webkit-text-stroke:0.3px #fff;">Category</div>
<div class="t" style="left:933.00px;top:160.12px;font-size:13.8px;line-height:13.8px;font-weight:700;color:#fff;transform:scaleX(0.93);transform-origin:left;-webkit-text-stroke:0.3px #fff;">2024</div>
<div class="t" style="left:1083.00px;top:160.12px;font-size:13.8px;line-height:13.8px;font-weight:700;color:#fff;transform:scaleX(0.93);transform-origin:left;-webkit-text-stroke:0.3px #fff;">2023</div>
<div class="r" style="left:912px;top:158px;width:14px;height:14px;background:#fff;border:1px solid #9a9a9a;border-radius:2px"></div>
<svg class="r" style="left:916px;top:164px" width="9" height="5" viewBox="0 0 9 5"><path d="M0.7 0.7 L4.5 4.3 L8.3 0.7" fill="none" stroke="#555" stroke-width="1"/></svg>
<div class="r" style="left:1062px;top:158px;width:14px;height:14px;background:#fff;border:1px solid #9a9a9a;border-radius:2px"></div>
<svg class="r" style="left:1066px;top:164px" width="9" height="5" viewBox="0 0 9 5"><path d="M0.7 0.7 L4.5 4.3 L8.3 0.7" fill="none" stroke="#555" stroke-width="1"/></svg>
<div class="r" style="left:1204px;top:158px;width:14px;height:14px;background:#fff;border:1px solid #9a9a9a;border-radius:2px"></div>
<svg class="r" style="left:1208px;top:164px" width="9" height="5" viewBox="0 0 9 5"><path d="M0.7 0.7 L4.5 4.3 L8.3 0.7" fill="none" stroke="#555" stroke-width="1"/></svg>
<div class="t" style="left:769.70px;top:180.34px;font-size:13.3px;line-height:13.3px;font-weight:400;color:#000000;transform:scaleX(1.0188844971453668);transform-origin:left;">Operating Activities</div>
<div class="t" style="right:515.70px;top:180.34px;font-size:13.3px;line-height:13.3px;font-weight:400;color:#000000;text-align:right;transform-origin:right;">-$30,000</div>
<div class="t" style="right:373.70px;top:180.34px;font-size:13.3px;line-height:13.3px;font-weight:400;color:#000000;text-align:right;transform-origin:right;">-$30,000</div>
<div class="t" style="left:769.70px;top:219.34px;font-size:13.3px;line-height:13.3px;font-weight:400;color:#000000;transform:scaleX(1.0096640589047399);transform-origin:left;">Investing Activities</div>
<div class="t" style="right:515.70px;top:219.34px;font-size:13.3px;line-height:13.3px;font-weight:400;color:#000000;text-align:right;transform-origin:right;">$100,000</div>
<div class="t" style="right:373.70px;top:219.34px;font-size:13.3px;line-height:13.3px;font-weight:400;color:#000000;text-align:right;transform-origin:right;">$60,000</div>
<div class="t" style="left:769.70px;top:258.34px;font-size:13.3px;line-height:13.3px;font-weight:400;color:#000000;transform:scaleX(1.004420866489832);transform-origin:left;">Financing Activities</div>
<div class="t" style="right:515.70px;top:258.34px;font-size:13.3px;line-height:13.3px;font-weight:400;color:#000000;text-align:right;transform-origin:right;">-</div>
<div class="t" style="right:373.70px;top:258.34px;font-size:13.3px;line-height:13.3px;font-weight:400;color:#000000;text-align:right;transform-origin:right;">-</div>
<div class="t" style="left:769.70px;top:297.34px;font-size:13.3px;line-height:13.3px;font-weight:400;color:#000000;transform:scaleX(0.9561586638830898);transform-origin:left;">Net Change in Cash</div>
<div class="t" style="right:515.70px;top:297.34px;font-size:13.3px;line-height:13.3px;font-weight:400;color:#000000;text-align:right;transform-origin:right;">$80,000</div>
<div class="t" style="right:373.70px;top:297.34px;font-size:13.3px;line-height:13.3px;font-weight:400;color:#000000;text-align:right;transform-origin:right;">$60,000</div>
<div class="t" style="left:769.70px;top:336.34px;font-size:13.3px;line-height:13.3px;font-weight:400;color:#000000;transform:scaleX(0.9563365282215122);transform-origin:left;">Beginning Cash</div>
<div class="t" style="right:515.70px;top:336.34px;font-size:13.3px;line-height:13.3px;font-weight:400;color:#000000;text-align:right;transform-origin:right;">$540,000</div>
<div class="t" style="right:373.70px;top:336.34px;font-size:13.3px;line-height:13.3px;font-weight:400;color:#000000;text-align:right;transform-origin:right;">$480,000</div>
<div class="t" style="left:769.70px;top:666.34px;font-size:13.3px;line-height:13.3px;font-weight:400;color:#000000;transform:scaleX(0.9674078586658544);transform-origin:left;">Net Change as % of Ending</div>
<div class="t" style="right:515.70px;top:666.34px;font-size:13.3px;line-height:13.3px;font-weight:400;color:#000000;text-align:right;transform-origin:right;">12.9%</div>
<div class="t" style="right:373.70px;top:666.34px;font-size:13.3px;line-height:13.3px;font-weight:400;color:#000000;text-align:right;transform-origin:right;">11.1%</div>
<div class="r" style="left:1217px;top:676px;width:6px;height:5px;background:#0c2a4b;"></div>
<div class="r" style="left:768px;top:358px;width:454px;height:279px;background:#fff;border:1px solid #d9d9d9"></div>
<div class="t" style="left:397.50px;width:1200px;top:372.02px;font-size:16.4px;line-height:16.4px;font-weight:400;color:#595959;text-align:center;transform-origin:center;">Beginning vs Ending Cash</div>
<div class="r" style="left:862px;top:577px;width:347px;height:1px;background:#d0d0d0;"></div>
<div class="t" style="right:744.00px;top:568.97px;font-size:10.9px;line-height:10.9px;font-weight:400;color:#595959;text-align:right;transform-origin:right;">-</div>
<div class="r" style="left:862px;top:553px;width:347px;height:1px;background:#d9d9d9;"></div>
<div class="t" style="right:744.00px;top:546.32px;font-size:10.9px;line-height:10.9px;font-weight:400;color:#595959;text-align:right;transform-origin:right;">$100,000</div>
<div class="r" style="left:862px;top:529px;width:347px;height:1px;background:#d9d9d9;"></div>
<div class="t" style="right:744.00px;top:522.07px;font-size:10.9px;line-height:10.9px;font-weight:400;color:#595959;text-align:right;transform-origin:right;">$200,000</div>
<div class="r" style="left:862px;top:504px;width:347px;height:1px;background:#d9d9d9;"></div>
<div class="t" style="right:744.00px;top:497.82px;font-size:10.9px;line-height:10.9px;font-weight:400;color:#595959;text-align:right;transform-origin:right;">$300,000</div>
<div class="r" style="left:862px;top:480px;width:347px;height:1px;background:#d9d9d9;"></div>
<div class="t" style="right:744.00px;top:473.57px;font-size:10.9px;line-height:10.9px;font-weight:400;color:#595959;text-align:right;transform-origin:right;">$400,000</div>
<div class="r" style="left:862px;top:456px;width:347px;height:1px;background:#d9d9d9;"></div>
<div class="t" style="right:744.00px;top:449.32px;font-size:10.9px;line-height:10.9px;font-weight:400;color:#595959;text-align:right;transform-origin:right;">$500,000</div>
<div class="r" style="left:862px;top:432px;width:347px;height:1px;background:#d9d9d9;"></div>
<div class="t" style="right:744.00px;top:425.07px;font-size:10.9px;line-height:10.9px;font-weight:400;color:#595959;text-align:right;transform-origin:right;">$600,000</div>
<div class="r" style="left:862px;top:407px;width:347px;height:1px;background:#d9d9d9;"></div>
<div class="t" style="right:744.00px;top:400.82px;font-size:10.9px;line-height:10.9px;font-weight:400;color:#595959;text-align:right;transform-origin:right;">$700,000</div>
<div class="r" style="left:904px;top:446.0px;width:39px;height:131.0px;background:#4472c4"></div>
<div class="r" style="left:954px;top:460.6px;width:38px;height:116.4px;background:#ed7d31"></div>
<div class="r" style="left:1078px;top:426.6px;width:38px;height:150.4px;background:#4472c4"></div>
<div class="r" style="left:1127px;top:446.0px;width:39px;height:131.0px;background:#ed7d31"></div>
<div class="t" style="left:348.20px;width:1200px;top:586.88px;font-size:10.3px;line-height:10.3px;font-weight:400;color:#595959;text-align:center;transform-origin:center;">Beginning Cash</div>
<div class="t" style="left:521.60px;width:1200px;top:586.88px;font-size:10.3px;line-height:10.3px;font-weight:400;color:#595959;text-align:center;transform-origin:center;">Ending Cash</div>
<div class="r" style="left:948px;top:615px;width:7px;height:7px;background:#4472c4;"></div>
<div class="t" style="left:957.60px;top:612.95px;font-size:10.1px;line-height:10.1px;font-weight:400;color:#595959;transform-origin:left;">Series1</div>
<div class="r" style="left:1003px;top:615px;width:7px;height:7px;background:#ed7d31;"></div>
<div class="t" style="left:1012.50px;top:612.95px;font-size:10.1px;line-height:10.1px;font-weight:400;color:#595959;transform-origin:left;">Series2</div>
<div class="t" style="left:774px;top:489.5px;width:40px;font-size:11px;line-height:11px;color:#595959;text-align:center;transform:rotate(-90deg);transform-origin:center">Cash ($)</div>
<svg class="r" style="left:1225px;top:120px" width="90" height="100" viewBox="1225 120 90 100">
<defs><clipPath id="cpJ"><path d="M1285.5 126.8 H1299.8 Q1302.8 126.8 1302.8 129.8 V178 Q1302.8 214 1266 214 H1234.2 L1252.7 194 H1266 Q1282.5 194 1282.5 178 V129.8 Q1282.5 126.8 1285.5 126.8 Z"/></clipPath>
<clipPath id="cpM"><path d="M1260.5 147 H1273.8 Q1276.8 147 1276.8 150 V183 Q1276.8 189.6 1270 189.6 H1264 Q1257.4 189.6 1257.4 183 V150 Q1257.4 147 1260.5 147 Z"/></clipPath>
<clipPath id="cpO"><path d="M1234.4 167.6 H1248.3 Q1251.3 167.6 1251.3 170.6 V185 L1233 205 Q1231.4 205 1231.4 203 V170.6 Q1231.4 167.6 1234.4 167.6 Z"/></clipPath></defs>
<g clip-path="url(#cpJ)"><rect x="1225" y="120" width="90" height="100" fill="#2fb89c"/><path d="M1282 150 L1303 125 L1282 125 Z" fill="#58c9aa"/><path d="M1250 216 L1304 160 L1304 216 Z" fill="#15529b"/></g>
<g clip-path="url(#cpM)"><rect x="1225" y="120" width="90" height="100" fill="#2fb89c"/><path d="M1257 172 L1278 150 L1278 145 L1257 145 Z" fill="#58c9aa"/></g>
<g clip-path="url(#cpO)"><rect x="1225" y="120" width="90" height="100" fill="#f5a220"/><path d="M1230 200 L1252 178 L1252 190 L1230 210 Z" fill="#f0861f"/></g>
</svg>
<svg class="r" style="left:1305px;top:140px" width="289" height="60" viewBox="1305 140 289 60">
<defs><linearGradient id="lg" x1="1315" y1="0" x2="1577" y2="0" gradientUnits="userSpaceOnUse"><stop offset="0" stop-color="#2457a6"/><stop offset="0.3" stop-color="#1a7db5"/><stop offset="0.7" stop-color="#14a8b2"/><stop offset="1" stop-color="#63ccb2"/></linearGradient></defs>
<g fill="none" stroke="url(#lg)" stroke-linecap="butt" stroke-linejoin="miter">
<path stroke-width="2.7" d="M1345.5 156.8 C1341.5 155 1337.5 154.6 1333.5 154.6 C1323 154.6 1316.3 161.5 1316.3 170.2 C1316.3 179.5 1323 185.8 1333.5 185.8 C1338.5 185.8 1343 184.8 1347 183.2"/>
<path stroke-width="1.9" d="M1351.8 187.1 L1365.8 154"/>
<path stroke-width="3.1" d="M1365.2 154 L1378.6 187.1"/>
<path stroke-width="1.5" d="M1357 173.8 H1373.6"/>
<path stroke-width="3.1" d="M1388 153.3 V187.1"/>
<path stroke-width="2" d="M1386.5 186.1 H1406"/>
<path stroke-width="2.7" d="M1436.9 156.8 C1432.9 155 1428.9 154.6 1424.9 154.6 C1414.4 154.6 1407.7 161.5 1407.7 170.2 C1407.7 179.5 1414.4 185.8 1424.9 185.8 C1429.9 185.8 1434.4 184.8 1438.4 183.2"/>
<path stroke-width="2.9" d="M1443.4 153.3 V175 C1443.4 182.5 1448.5 186.3 1456.5 186.3 C1464.5 186.3 1469.6 182.5 1469.6 175 V153.3"/>
<path stroke-width="3.1" d="M1479.6 153.3 V187.1"/>
<path stroke-width="2" d="M1478 186.1 H1498"/>
<ellipse stroke-width="2.6" cx="1515.3" cy="170.45" rx="15.6" ry="15.85"/>
<path stroke-width="1.9" d="M1537.3 187.1 L1542.3 153.3"/>
<path stroke-width="1.9" d="M1542.3 154 L1556.8 185.5"/>
<path stroke-width="2.2" d="M1556.8 185.5 L1570.4 154"/>
<path stroke-width="3.1" d="M1570.2 153.3 L1575.4 187.1"/>
</g>
<path d="M1333.7 165.5 L1335.4 168.8 L1338.7 170.5 L1335.4 172.2 L1333.7 175.5 L1332 172.2 L1328.7 170.5 L1332 168.8 Z" fill="#2461ab"/>
<path d="M1365.8 153.3 L1368 158 L1363.6 158 Z" fill="#1f6fb0"/>
<path d="M1556.8 187 L1554.5 182 L1559 182 Z" fill="#3bbdb0"/>
</svg>
<div class="r" style="left:35px;top:34px;width:2px;height:30px;background:#bdbdbd;"></div>
<div class="r" style="left:0px;top:62px;width:36px;height:2px;background:#bdbdbd;"></div>
<div class="r" style="left:35px;top:62px;width:194px;height:30px;border:2px solid #107c41;"></div>
<div class="r" style="left:37px;top:64px;width:192px;height:28px;border:1px solid #fff;"></div>
<div class="r" style="left:230px;top:93px;width:4px;height:4px;background:#107c41;border:1px solid #fff;"></div>
<svg class="r" style="left:1016px;top:330px" width="18" height="18" viewBox="0 0 18 18"><path d="M6.5 2.5 H11 V6.5 H15 V11 H11 V15 H6.5 V11 H2.5 V6.5 H6.5 Z" fill="#000" opacity="0.5"/><path d="M5.5 1.5 H10 V5.5 H14.5 V10 H10 V14.5 H5.5 V10 H1.5 V5.5 H5.5 Z" fill="#fff" stroke="#000" stroke-width="1.2"/></svg>
<div class="r" style="left:0px;top:699px;width:1594px;height:6px;background:#e8e8e8;"></div>
<div class="r" style="left:12px;top:702px;width:785px;height:8px;background:#858585;border-radius:3px"></div>
<svg class="r" style="left:0px;top:700px" width="6" height="5" viewBox="0 0 6 5"><path d="M5 0 L5 5 L0 5 Z" fill="#858585"/></svg>
<div class="r" style="left:1530px;top:627px;width:100px;height:100px;background:#efefef;border:1px solid #c9c9c9;border-radius:9px;box-shadow:0 0 6px rgba(0,0,0,0.12)"></div>
<svg class="r" style="left:1546px;top:642px" width="16" height="15" viewBox="0 0 16 15"><rect x="1.5" y="0.5" width="13" height="11" fill="#1f86d8"/><rect x="3.5" y="0.5" width="7" height="11" fill="#47b8f0"/><rect x="0" y="10.5" width="16" height="1.5" fill="#1565b8"/><rect x="5" y="11" width="6" height="3.5" fill="#1565b8"/></svg>
<div class="t" style="left:1570.00px;top:641.57px;font-size:13.5px;line-height:13.5px;font-weight:400;color:#1f1f1f;transform-origin:left;">Ring</div>
<div class="r" style="left:1547px;top:681px;width:46px;height:46px;background:#1e9ad6;border-radius:17px"></div>
<div class="r" style="left:1562px;top:694px;width:3px;height:3px;background:#f26a2e;border-radius:2px"></div>
<svg class="r" style="left:1550px;top:694px" width="44" height="11" viewBox="1550 694 44 11"><g fill="none" stroke="#fff" stroke-width="1.3"><path d="M1560.6 699.6 A4.3 4.5 0 1 0 1560.6 705.6"/><path d="M1563 698 V705"/><ellipse cx="1571" cy="702.6" rx="4.4" ry="4.5"/><ellipse cx="1581.8" cy="702.6" rx="4.3" ry="4.5"/></g></svg>
</body></html>
